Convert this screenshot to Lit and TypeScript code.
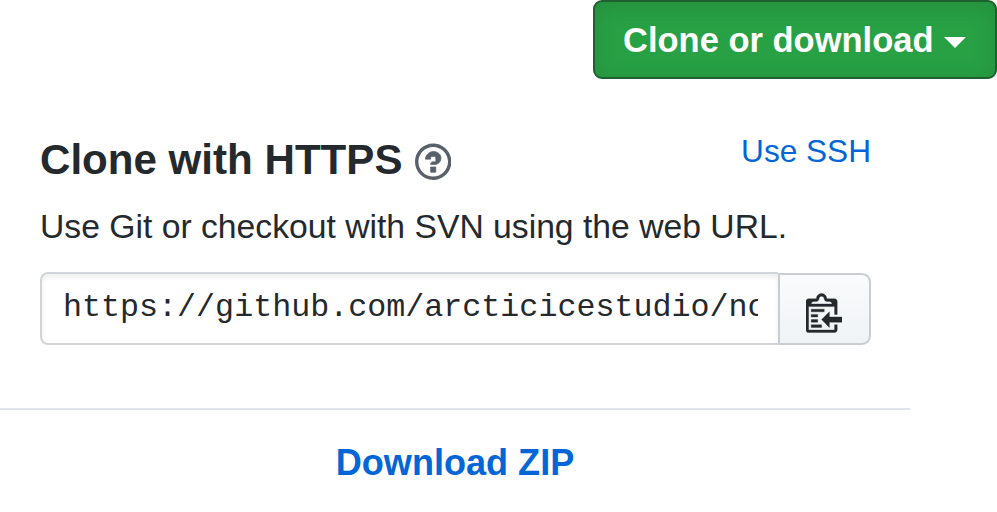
import { LitElement, html, css } from "lit";
import { customElement } from "lit/decorators.js";

@customElement("app-root")
export class AppRoot extends LitElement {
  static styles = css`
    :host {
      display: block;
      width: 997px;
      height: 512px;
      overflow: hidden;
      background: #fff;
      color: #24292e;
      font-family: "Liberation Sans", Arial, sans-serif;
    }
    * {
      box-sizing: border-box;
    }
    .toolbar {
      display: flex;
      justify-content: flex-end;
      height: 79px;
    }
    .clone {
      display: flex;
      align-items: center;
      width: 404px;
      height: 79px;
      padding: 1px 0 0 28px;
      border: 2px solid #1f6030;
      border-radius: 9px;
      background: #28a044;
      box-shadow: inset 0 4px 20px rgba(27, 90, 40, 0.25);
      color: #fff;
      font-family: inherit;
      font-size: 34.5px;
      font-weight: 700;
      white-space: nowrap;
    }
    .caret {
      width: 0;
      margin: 4px 0 0 11px;
      border: 11px solid transparent;
      border-top-color: #fff;
      border-bottom: 0;
    }
    .panel {
      width: 910px;
    }
    .body {
      height: 329px;
      padding: 58px 39px 0 40px;
    }
    .head {
      display: flex;
      justify-content: space-between;
      height: 60px;
    }
    .title {
      display: flex;
      gap: 12.5px;
      margin: 0;
      font-size: 42.1px;
      line-height: 46px;
      font-weight: 700;
      white-space: nowrap;
    }
    .help {
      width: 36.4px;
      height: 41.6px;
      margin-top: 3.5px;
      fill: #586069;
    }
    .mark {
      stroke: #586069;
      stroke-width: 0.25;
    }
    a {
      color: #0366d6;
      text-decoration: none;
    }
    .ssh {
      font-size: 31.6px;
      line-height: 28px;
    }
    .desc {
      margin: 0;
      height: 75px;
      font-size: 33.7px;
      line-height: 59px;
      white-space: nowrap;
    }
    .group {
      display: flex;
      align-items: flex-end;
      height: 73px;
    }
    .field {
      width: 738px;
      height: 73px;
      padding: 0 20px 0 21px;
      border: 2px solid #d1d5da;
      border-right: 0;
      border-radius: 8px 0 0 8px;
      box-shadow: inset 0 3px 5px rgba(27, 31, 35, 0.075);
    }
    .url {
      overflow: hidden;
      font-family: "Liberation Mono", monospace;
      font-size: 31.7px;
      line-height: 68px;
      white-space: nowrap;
    }
    .copy {
      display: flex;
      align-items: flex-start;
      width: 93px;
      height: 72px;
      padding: 16px 0 0 26px;
      border: 2px solid #c9ccd0;
      border-radius: 0 9px 9px 0;
      background: linear-gradient(#fafbfc, #eff3f6);
    }
    .clippy {
      display: block;
      width: 36.4px;
      height: 41.6px;
      fill: #24292e;
      stroke: #24292e;
      stroke-width: 0.14;
    }
    .download {
      display: block;
      height: 104px;
      border-top: 2px solid #e1e4e8;
      font-size: 36.1px;
      font-weight: 700;
      line-height: 105px;
      text-align: center;
    }
  `;

  render() {
    return html`
      <div class="toolbar">
        <button class="clone">Clone or download<span class="caret"></span></button>
      </div>
      <div class="panel">
        <div class="body">
          <div class="head">
            <h4 class="title">
              <span>Clone with HTTPS</span>
              <svg class="help" viewBox="0 0 14 16">
                <path
                  class="mark"
                  d="M6 10h2v2H6v-2zm4-3.5C10 8.64 8 9 8 9H6c0-.55.45-1 1-1h.5c.28 0 .5-.22.5-.5v-1c0-.28-.22-.5-.5-.5h-1c-.28 0-.5.22-.5.5V7H4c0-1.5 1.5-3 3-3s3 1 3 2.5z"
                />
                <path
                  fill-rule="evenodd"
                  d="M7 2.3c3.14 0 5.7 2.56 5.7 5.7s-2.56 5.7-5.7 5.7A5.71 5.71 0 0 1 1.3 8c0-3.14 2.56-5.7 5.7-5.7zM7 1C3.14 1 0 4.14 0 8s3.14 7 7 7 7-3.14 7-7-3.14-7-7-7z"
                />
              </svg>
            </h4>
            <a class="ssh" href="#">Use SSH</a>
          </div>
          <p class="desc">Use Git or checkout with SVN using the web URL.</p>
          <div class="group">
            <div class="field"><div class="url">https://github.com/arcticicestudio/nord</div></div>
            <button class="copy" aria-label="Copy">
              <svg class="clippy" viewBox="0 0 14 16">
                <path
                  fill-rule="evenodd"
                  d="M2 13h4v1H2v-1zm5-6H2v1h5V7zm2 3V8l-3 3 3 3v-2h5v-2H9zM4.5 9H2v1h2.5V9zM2 12h2.5v-1H2v1zm9 1h1v2c-.02.28-.11.52-.3.7-.19.18-.42.28-.7.3H1c-.55 0-1-.45-1-1V4c0-.55.45-1 1-1h3c0-1.11.89-2 2-2 1.11 0 2 .89 2 2h3c.55 0 1 .45 1 1v5h-1V6H1v9h10v-2zM2 5h8c0-.55-.45-1-1-1H8c-.55 0-1-.45-1-1s-.45-1-1-1-1 .45-1 1-.45 1-1 1H3c-.55 0-1 .45-1 1z"
                />
              </svg>
            </button>
          </div>
        </div>
        <a class="download" href="#">Download ZIP</a>
      </div>
    `;
  }
}
